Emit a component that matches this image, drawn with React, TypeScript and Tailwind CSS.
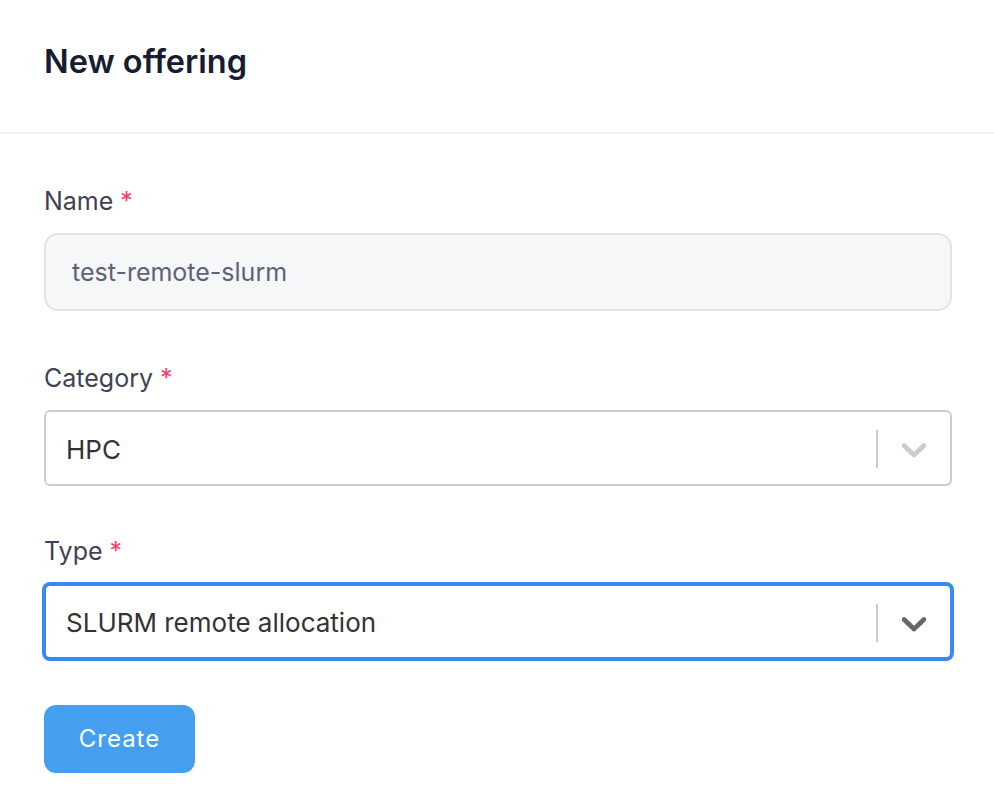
import React from "react";

function Chevron({ color }: { color: string }) {
  return (
    <svg width="42" height="42" viewBox="0 0 20 20" fill={color} aria-hidden="true">
      <path d="M4.516 7.548c0.436-0.446 1.043-0.481 1.576 0l3.908 3.747 3.908-3.747c0.533-0.481 1.141-0.446 1.574 0 0.436 0.445 0.408 1.197 0 1.615-0.406 0.418-4.695 4.502-4.695 4.502-0.217 0.223-0.502 0.335-0.787 0.335s-0.57-0.112-0.789-0.335c0 0-4.287-4.084-4.695-4.502s-0.436-1.17 0-1.615z" />
    </svg>
  );
}

function Label({ text }: { text: string }) {
  return (
    <div className="h-[24px] flex items-center text-[25px] leading-[24px] font-normal text-[#3f4254]">
      {text}
      <span className="ml-[7px] text-[#f1416c]">*</span>
    </div>
  );
}

export default function App() {
  return (
    <div className="w-[994px] h-[810px] bg-white font-['Inter','Noto_Sans',sans-serif] overflow-hidden">
      <div className="h-[134px] border-b-2 border-[#eff2f5] pt-[46px] px-[44px]">
        <h1 className="text-[32.5px] leading-[32px] font-semibold text-[#181c32]">New offering</h1>
      </div>
      <div className="px-[44px] pr-[42px] pt-[55px] flex flex-col">
        <Label text="Name" />
        <div className="mt-[20px] h-[78px] rounded-[14px] border-2 border-[#e2e4ea] bg-[#f6f7f9] flex items-center px-[26px] pt-[2px] text-[25px] text-[#5e6278]">
          test-remote-slurm
        </div>
        <div className="mt-[55px]">
          <Label text="Category" />
        </div>
        <div className="mt-[20px] h-[76px] rounded-[6px] border-2 border-[#cccccc] bg-white flex items-center pl-[20px] pt-[2px] text-[26px] text-[#333333]">
          <span className="flex-1">HPC</span>
          <span className="w-[2px] h-[38px] bg-[#cccccc]" />
          <span className="w-[72px] flex items-center justify-center">
            <Chevron color="#cccccc" />
          </span>
        </div>
        <div className="mt-[53px]">
          <Label text="Type" />
        </div>
        <div className="mt-[21px] h-[75px] rounded-[6px] border-2 border-[#3b87f5] shadow-[0_0_0_2px_#3b87f5] bg-white flex items-center pl-[20px] pt-[2px] text-[26px] text-[#333333]">
          <span className="flex-1">SLURM remote allocation</span>
          <span className="w-[2px] h-[38px] bg-[#cccccc]" />
          <span className="w-[72px] flex items-center justify-center">
            <Chevron color="#666666" />
          </span>
        </div>
        <div className="mt-[46px]">
          <button className="w-[151px] h-[68px] rounded-[12px] bg-[#449ff0] text-white text-[24px] tracking-[1px] flex items-center justify-center">
            Create
          </button>
        </div>
      </div>
    </div>
  );
}
